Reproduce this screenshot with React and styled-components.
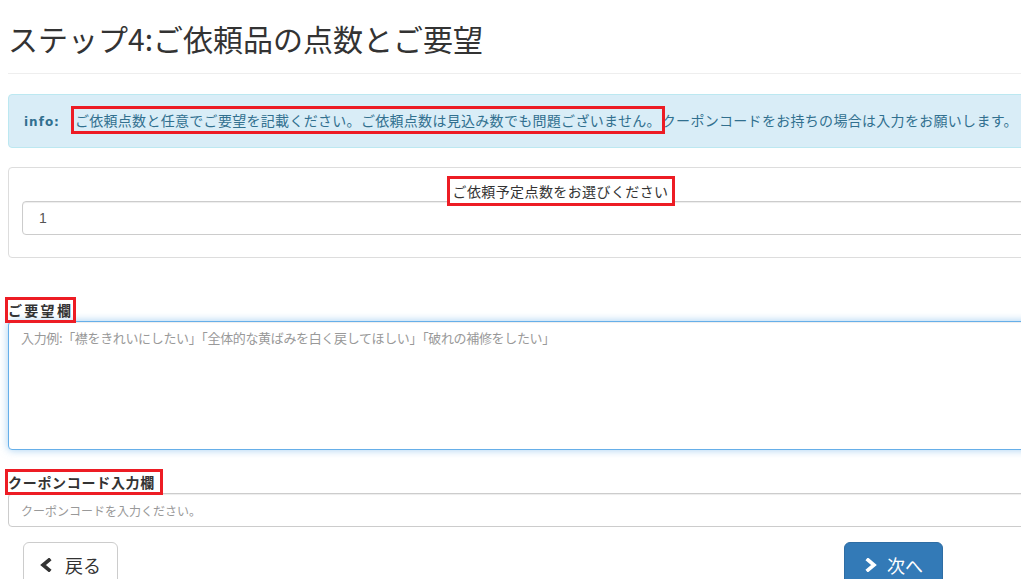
import styled, { createGlobalStyle } from "styled-components";

const GlobalStyle = createGlobalStyle`
  html, body {
    margin: 0;
    padding: 0;
    background: #fff;
    overflow: hidden;
  }
  body {
    font-family: "Noto Sans CJK JP", "Noto Sans", sans-serif;
    color: #333;
  }
  * {
    box-sizing: border-box;
  }
`;

const Page = styled.div`
  padding-left: 8px;
  width: 1114px;
`;

const Title = styled.h1`
  margin: 20px 0 0;
  font-size: 30px;
  line-height: 36px;
  font-weight: 400;
  color: #333;
`;

const Rule = styled.hr`
  margin: 17px 0 0;
  border: 0;
  border-top: 1px solid #eee;
`;

const Alert = styled.div`
  margin-top: 20px;
  padding: 15px;
  background: #d9edf7;
  border: 1px solid #bce8f1;
  border-radius: 4px;
  color: #31708f;
  font-size: 14px;
  line-height: 20px;
  letter-spacing: 0.3px;
  white-space: nowrap;
`;

const AlertTag = styled.strong`
  font-family: "DejaVu Sans", sans-serif;
  font-size: 12px;
  letter-spacing: 1px;
  margin-right: 14px;
`;

const Mark = styled.span`
  outline: 3px solid #ed1c24;
  padding: ${({ $pad }) => $pad || "0"};
  background: ${({ $fill }) => ($fill ? "#fff" : "transparent")};
  position: relative;
  z-index: 1;
`;

const Panel = styled.div`
  margin-top: 19px;
  padding: 13px 14px 22px 13px;
  border: 1px solid #ddd;
  border-radius: 4px;
`;

const PanelLabel = styled.div`
  text-align: center;
  font-size: 14px;
  line-height: 20px;
  letter-spacing: 0.4px;
  color: #333;
`;

const Select = styled.select`
  display: block;
  width: 100%;
  height: 34px;
  padding: 6px 16px;
  border: 1px solid #ccc;
  border-radius: 4px;
  background: #fff;
  color: #555;
  font-family: "Liberation Sans", Arial, sans-serif;
  font-size: 14px;
  appearance: none;
  box-shadow: inset 0 1px 1px rgba(0, 0, 0, 0.075);
`;

const FieldLabel = styled.label`
  display: block;
  margin: ${({ $top }) => $top} 0 1px;
  font-size: 14px;
  line-height: 20px;
  font-weight: 700;
  letter-spacing: ${({ $spacing }) => $spacing || "0.7px"};
  color: #333;
`;

const TextArea = styled.textarea`
  display: block;
  width: 100%;
  height: 129px;
  padding: 6px 12px;
  border: 1px solid #66afe9;
  border-radius: 4px;
  outline: none;
  resize: none;
  font-family: "Noto Sans CJK JP", sans-serif;
  font-size: 13px;
  line-height: 20px;
  letter-spacing: -0.35px;
  box-shadow: inset 0 1px 1px rgba(0, 0, 0, 0.075),
    0 0 8px rgba(102, 175, 233, 0.6);

  &::placeholder {
    color: #999;
  }
`;

const TextInput = styled.input`
  display: block;
  width: 100%;
  height: 34px;
  padding: 6px 12px;
  border: 1px solid #ccc;
  border-radius: 4px;
  outline: none;
  font-family: "Noto Sans CJK JP", sans-serif;
  font-size: 12px;
  box-shadow: inset 0 1px 1px rgba(0, 0, 0, 0.075);

  &::placeholder {
    color: #999;
  }
`;

const ButtonRow = styled.div`
  display: grid;
  grid-template-columns: 821px auto;
  align-items: start;
  margin-top: 15px;
  padding-left: 15px;
`;

const Button = styled.button`
  display: inline-flex;
  align-items: center;
  gap: ${({ $primary }) => ($primary ? "10px" : "13px")};
  justify-self: start;
  padding: 10px ${({ $primary }) => ($primary ? "19px 10px 20px" : "16px")};
  border: 1px solid ${({ $primary }) => ($primary ? "#2e6da4" : "#ccc")};
  border-radius: 6px;
  background: ${({ $primary }) => ($primary ? "#337ab7" : "#fff")};
  color: ${({ $primary }) => ($primary ? "#fff" : "#333")};
  font-family: "Noto Sans CJK JP", sans-serif;
  font-size: 18px;
  line-height: 24px;
`;

function Chevron({ dir }) {
  const points = dir === "left" ? "9,2 3,7 9,12" : "3,2 9,7 3,12";
  return (
    <svg width="12" height="14" viewBox="0 0 12 14" aria-hidden="true">
      <polyline
        points={points}
        fill="none"
        stroke="currentColor"
        strokeWidth="3.6"
        strokeLinecap="square"
        strokeLinejoin="miter"
      />
    </svg>
  );
}

export default function App() {
  return (
    <>
      <GlobalStyle />
      <Page>
        <Title>ステップ4:ご依頼品の点数とご要望</Title>
        <Rule />
        <Alert>
          <AlertTag>info:</AlertTag>
          <Mark $pad="1px 1px">
            ご依頼点数と任意でご要望を記載ください。ご依頼点数は見込み数でも問題ございません。
          </Mark>
          クーポンコードをお持ちの場合は入力をお願いします。
        </Alert>
        <Panel>
          <PanelLabel>
            <Mark $pad="2px 3px" $fill>
              ご依頼予定点数をお選びください
            </Mark>
          </PanelLabel>
          <Select defaultValue="1">
            <option value="1">1</option>
          </Select>
        </Panel>
        <FieldLabel $top="42px" $spacing="2.3px">
          <Mark>ご要望欄</Mark>
        </FieldLabel>
        <TextArea placeholder="入力例:「襟をきれいにしたい」「全体的な黄ばみを白く戻してほしい」「破れの補修をしたい」" />
        <FieldLabel $top="22px">
          <Mark $pad="0 5px 0 0">クーポンコード入力欄</Mark>
        </FieldLabel>
        <TextInput placeholder="クーポンコードを入力ください。" />
        <ButtonRow>
          <Button type="button">
            <Chevron dir="left" />
            戻る
          </Button>
          <Button type="button" $primary>
            <Chevron dir="right" />
            次へ
          </Button>
        </ButtonRow>
      </Page>
    </>
  );
}
